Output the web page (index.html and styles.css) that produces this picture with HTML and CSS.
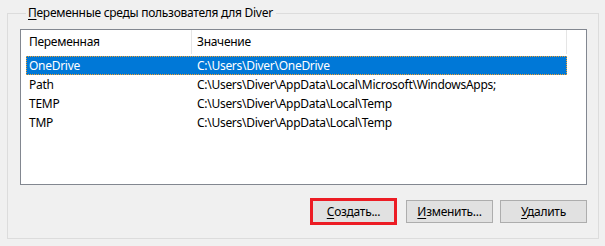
FILE: index.html
```html
<!DOCTYPE html>
<html lang="ru">

<head>
  <meta charset="UTF-8">
  <title>Переменные среды</title>
  <link rel="stylesheet" href="styles.css">
</head>

<body>
  <fieldset class="group">
    <legend><u>П</u>еременные среды пользователя для Diver</legend>

    <div class="list">
      <div class="head">
        <span class="col-name">Переменная</span>
        <span class="col-value">Значение</span>
      </div>
      <div class="row selected">
        <span class="col-name">OneDrive</span>
        <span class="col-value">C:\Users\Diver\OneDrive</span>
      </div>
      <div class="row">
        <span class="col-name">Path</span>
        <span class="col-value">C:\Users\Diver\AppData\Local\Microsoft\WindowsApps;</span>
      </div>
      <div class="row">
        <span class="col-name">TEMP</span>
        <span class="col-value">C:\Users\Diver\AppData\Local\Temp</span>
      </div>
      <div class="row">
        <span class="col-name">TMP</span>
        <span class="col-value">C:\Users\Diver\AppData\Local\Temp</span>
      </div>
    </div>

    <div class="buttons">
      <button class="btn marked"><u>С</u>оздать...</button>
      <button class="btn"><u>И</u>зменить...</button>
      <button class="btn"><u>У</u>далить</button>
    </div>
  </fieldset>
</body>

</html>
```

FILE: styles.css
```css
* {
  padding: 0;
  margin: 0;
  box-sizing: border-box;
}

body {
  background: #f0f0f0;
  font-family: "Noto Sans", "Liberation Sans", sans-serif;
  font-size: 12px;
  letter-spacing: -0.28px;
  color: #000;
  padding: 5px 6px 7px 7px;
}

u {
  text-decoration-thickness: 1px;
  text-underline-offset: 2px;
}

/* рамка группы */
.group {
  border: 1px solid #dcdcdc;
  padding: 8px 11px 14px 12px;
  height: 234px;
}

.group legend {
  margin-left: 6px;
  padding: 0 3px 0 2px;
  line-height: 16px;
}

/* список переменных */
.list {
  background: #fff;
  border: 1px solid #828790;
  height: 156px;
  padding-left: 5px;
}

.head,
.row {
  display: flex;
  width: 541px;
}

.head {
  height: 25px;
  margin-bottom: 1px;
}

.head .col-name,
.head .col-value {
  border-right: 1px solid #e5e5e5;
  height: 24px;
  line-height: 24px;
}

.col-name {
  width: 166px;
  padding-left: 3px;
  white-space: nowrap;
}

.col-value {
  flex: 1;
  padding-left: 5px;
  white-space: nowrap;
}

.row {
  height: 19px;
  line-height: 19px;
}

.row.selected {
  background: #0078d7;
  color: #fff;
  outline: 1px dotted #f0a030;
  outline-offset: -1px;
}

/* кнопки */
.buttons {
  display: flex;
  justify-content: flex-end;
  align-items: center;
  gap: 7px;
  margin-top: 13px;
}

.btn {
  width: 87px;
  height: 23px;
  background: #e1e1e1;
  border: 1px solid #adadad;
  font-family: inherit;
  font-size: 12px;
  letter-spacing: inherit;
  color: #000;
}

.btn.marked {
  height: 27px;
  border: 3px solid #ec1c24;
  margin-right: 2px;
}
```
